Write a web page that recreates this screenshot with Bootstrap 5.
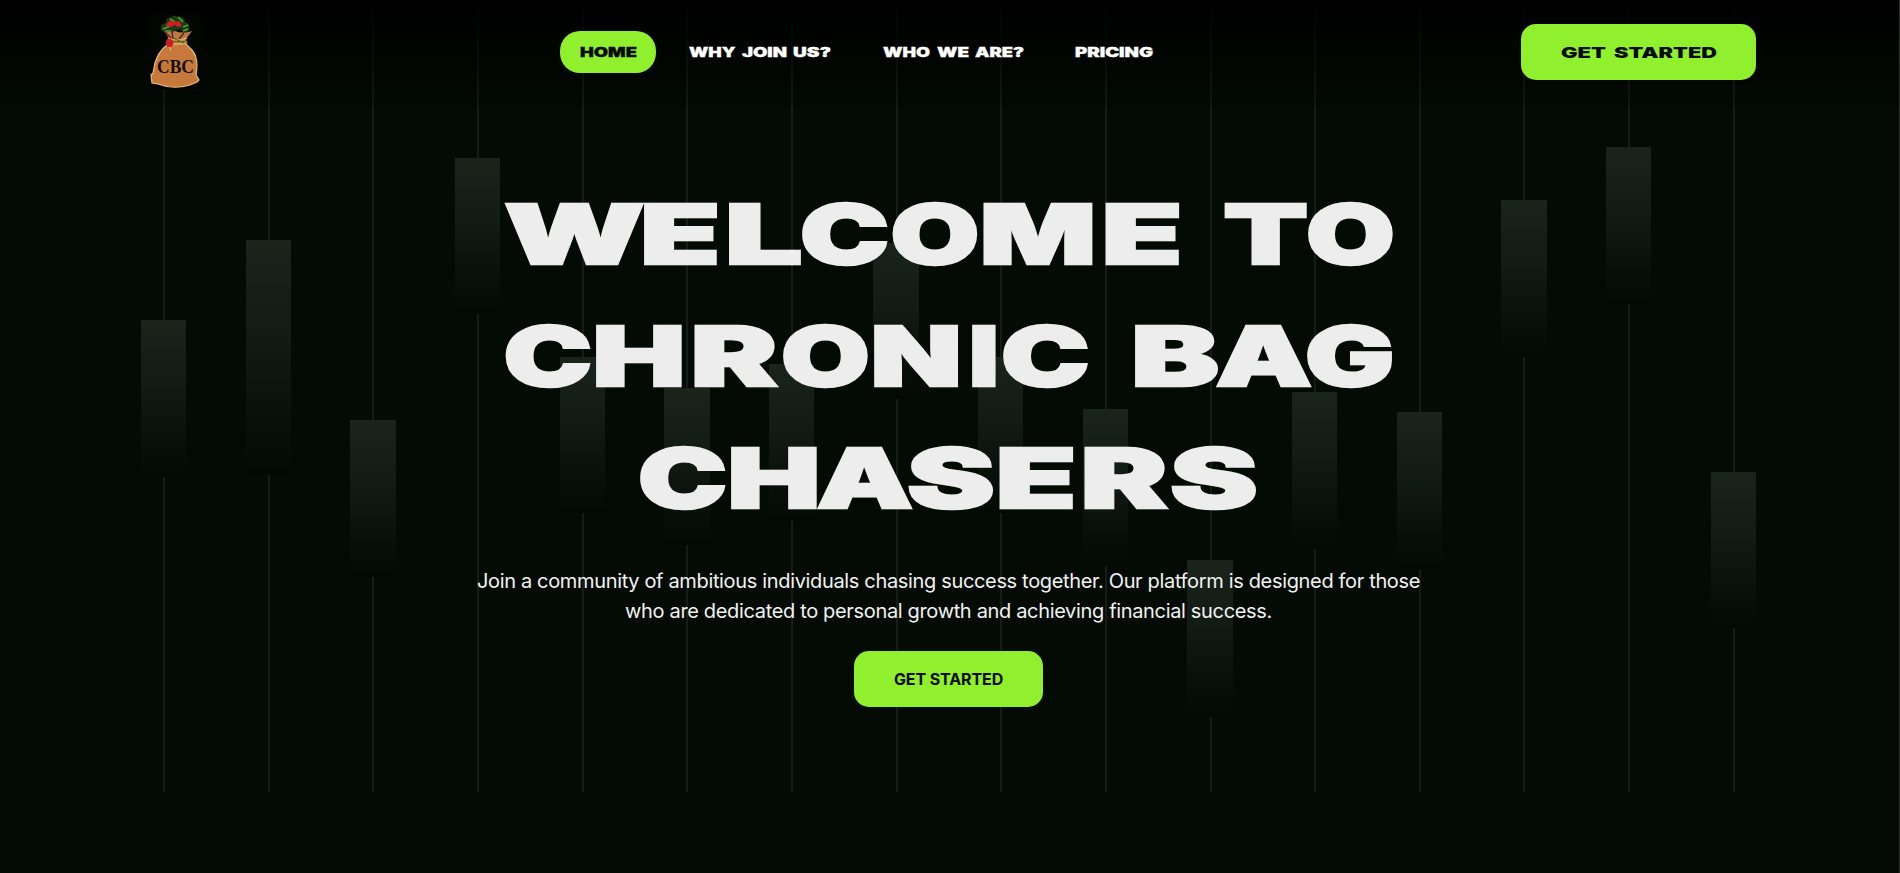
<!DOCTYPE html>
<html lang="en">
<head>
<meta charset="utf-8">
<meta name="viewport" content="width=device-width, initial-scale=1">
<title>Chronic Bag Chasers</title>
<link href="https://cdn.jsdelivr.net/npm/bootstrap@5.3.0/dist/css/bootstrap.min.css" rel="stylesheet">
<style>
  body { background: #030b04; color: #ededed; font-family: Inter, "Liberation Sans", sans-serif; height: 873px; overflow: hidden; border-right: 1px solid #2b2f2c; }
  .site-head { height: 109px; padding: 0 143px 0 150px; background: linear-gradient(#000, rgba(0,0,0,.15)); z-index: 3; }
  .wide { font-family: Inter, sans-serif; font-weight: 900; display: block; overflow: visible; }
  .brand svg { margin-top: 21px; }
  .pill { background: #90f02e; border-radius: 20px; height: 42px; width: 96px; padding: 0 20px; }
  .menu { margin-left: 359px; margin-bottom: 6px; }
  .cta { background: #90f02e; border-radius: 15px; height: 56px; color: #030b04; }
  .cta:hover { background: #a2f650; }
  .head-btn { width: 235px; margin-bottom: 5px; }
  .candles { top: 0; left: 141px; width: 1615px; height: 792px; z-index: 0; }
  .candle { width: 45.3px; }
  .wick { width: 2px; margin-left: 1px; background: #151d16; }
  .body-bar { width: 45.3px; height: 156.5px; background: linear-gradient(#1a241b, #121b14 40%, #0b120b 70%, #030a04); }
  .tall { height: 235px; }
  .hero { z-index: 2; padding-top: 59px; padding-right: 2px; }
  .lede { font-size: 20px; line-height: 30px; margin-top: 32px; letter-spacing: -.34px; color: #f2f2f2; }
  .hero-btn { width: 189px; font-size: 16px; font-weight: 700; margin-top: 25px; letter-spacing: -.1px; padding-bottom: 1px; }
</style>
</head>
<body class="position-relative">
<div class="candles position-absolute d-flex justify-content-between" id="candles" aria-hidden="true"></div>

<header class="site-head position-relative d-flex align-items-center">
  <a href="#" aria-label="CBC" class="brand d-block mb-4 pb-1"><svg width="51" height="75" viewBox="0 0 51 75" class="d-block">
    <rect width="51" height="75" fill="#020502"/>
    <path d="M17 31Q8 38 5 49L3 59L1 61L2 69L8 70Q23 76 40 71L47 68L49 66L46 61Q49 44 42 36L36 30Z" fill="#c6793b" stroke="#e0bf7e" stroke-width="1.2"/>
    <path d="M12 14Q18 19 25 17Q33 20 42 17L36 25L37 30Q27 32 17 28L18 23Z" fill="#bd7a47"/>
    <path d="M15 18l6 6M22 18l1 7M34 19l-5 6" stroke="#5b2c19" stroke-width="1.6"/>
    <path d="M20 25Q28 28 37 24M19 29Q28 32 37 28" stroke="#d6b458" stroke-width="1.5" fill="none"/>
    <path d="M20 27l18 1M23 24l11 5" stroke="#5b5b20" stroke-width="1"/>
    <path d="M11 16Q9 10 16 9Q15 3 22 3Q24 0 28 3Q35 2 35 8Q41 10 39 17Q34 20 30 15Q24 18 20 17Q15 20 11 16Z" fill="#183d16"/>
    <path d="M13 15l7-3M20 5l5 3M28 3l5 5M33 13l5-2M15 17l6 0M33 17l5-2" stroke="#5b9a34" stroke-width="1.7"/>
    <path d="M16 12q1-5 6-5l3 1 4-1 3 5-4 1-3-2-4 2z" fill="#d31c23"/>
    <ellipse cx="19.5" cy="29" rx="3.8" ry="4" fill="#d01b22"/><path d="M20 33q3 1 0 4l-1-4" fill="#d2a477"/>
    <text x="7" y="59" font-family="Liberation Serif, serif" font-weight="700" font-size="19.5" textLength="37" lengthAdjust="spacingAndGlyphs" fill="#120d08">CBC</text>
  </svg></a>

  <nav class="menu d-flex align-items-center">
    <a href="#" class="pill d-flex align-items-center"><svg class="wide" width="57" height="10" font-size="12.8" fill="#030b04" stroke="#030b04" stroke-width=".3"><text y="9.5" textLength="57" lengthAdjust="spacingAndGlyphs">HOME</text></svg></a>
    <a href="#" style="margin-left:33px"><svg class="wide" width="142" height="10" font-size="12.8" fill="#fff" stroke="#fff" stroke-width=".3"><text y="9.5" textLength="46.5" lengthAdjust="spacingAndGlyphs">WHY</text><text x="53" y="9.5" textLength="45" lengthAdjust="spacingAndGlyphs">JOIN</text><text x="104" y="9.5" textLength="38" lengthAdjust="spacingAndGlyphs">US?</text></svg></a>
    <a href="#" style="margin-left:52px"><svg class="wide" width="141" height="10" font-size="12.8" fill="#fff" stroke="#fff" stroke-width=".3"><text y="9.5" textLength="47" lengthAdjust="spacingAndGlyphs">WHO</text><text x="54" y="9.5" textLength="32" lengthAdjust="spacingAndGlyphs">WE</text><text x="92" y="9.5" textLength="49" lengthAdjust="spacingAndGlyphs">ARE?</text></svg></a>
    <a href="#" style="margin-left:51px"><svg class="wide" width="78" height="10" font-size="12.8" fill="#fff" stroke="#fff" stroke-width=".3"><text y="9.5" textLength="78" lengthAdjust="spacingAndGlyphs">PRICING</text></svg></a>
  </nav>

  <a href="#" class="cta head-btn ms-auto d-flex align-items-center justify-content-center"><svg class="wide" width="156" height="11" font-size="14.8" fill="#030b04"><text y="10.5" textLength="45" lengthAdjust="spacingAndGlyphs">GET</text><text x="53" y="10.5" textLength="103" lengthAdjust="spacingAndGlyphs">STARTED</text></svg></a>
</header>

<main class="hero position-relative d-flex flex-column align-items-center text-center">
  <h1 class="m-0"><svg class="wide" id="title" width="890" height="366" viewBox="504.5 0 890 366" font-size="82" fill="#ededed" stroke="#ededed" stroke-width="2.6">
    <text y="95.7" data-ink="505-643.5 644-717 729-802 802-887.5 892.5-977.5 983.5-1093 1105.5-1179">WELCOME</text>
    <text y="95.7" data-ink="1225.5-1308 1308-1393">TO</text>
    <text y="217.7" data-ink="505.5-590.5 596-682 694.5-778 783-868 874-959 972-997 1003-1088">CHRONIC</text>
    <text y="217.7" data-ink="1135-1218 1216.5-1312 1307-1392">BAG</text>
    <text y="339.7" data-ink="640-725.5 731-817 817.5-913 909.5-994 999.5-1073 1084.5-1168 1172.5-1257">CHASERS</text>
  </svg></h1>
  <p class="lede mb-0">Join a community of ambitious individuals chasing success together. Our platform is designed for those<br>who are dedicated to personal growth and achieving financial success.</p>
  <a href="#" class="cta hero-btn d-flex align-items-center justify-content-center text-decoration-none">GET STARTED</a>
</main>

<script src="https://cdn.jsdelivr.net/npm/bootstrap@5.3.0/dist/js/bootstrap.bundle.min.js"></script>
<script>
  // Upper wick length of each candle, left to right
  const tops = [320.3, 240, 420, 157.5, 356.5, 388, 364, 242.5, 356.5, 409, 560, 392, 412, 200, 147, 471.5];
  document.getElementById('candles').innerHTML = tops.map((t, i) =>
    `<div class="candle d-flex flex-column align-items-center"><div class="wick flex-shrink-0" style="height:${t}px"></div><div class="body-bar flex-shrink-0${i === 1 ? ' tall' : ''}"></div><div class="wick flex-grow-1"></div></div>`).join('');

  // Stretch every title letter so that its ink, outline included, spans the range listed in data-ink
  const outline = 2.6;
  const pen = document.createElement('canvas').getContext('2d');
  pen.font = '900 82px Inter';
  document.querySelectorAll('#title text').forEach(line => {
    const spans = line.dataset.ink.split(' ');
    line.innerHTML = [...line.textContent].map((ch, i) => {
      const [a, b] = spans[i].split('-').map(Number);
      const m = pen.measureText(ch);
      const k = (b - a - outline) / (m.actualBoundingBoxRight + m.actualBoundingBoxLeft);
      return `<tspan x="${a + outline / 2 + m.actualBoundingBoxLeft * k}" textLength="${m.width * k}" lengthAdjust="spacingAndGlyphs">${ch}</tspan>`;
    }).join('');
  });
</script>
</body>
</html>
